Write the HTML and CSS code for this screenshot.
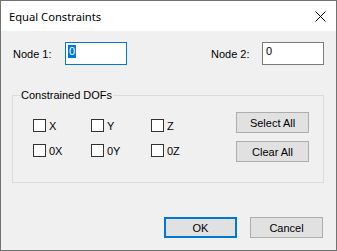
FILE: index.html
```html
<!DOCTYPE html>
<html lang="en">
<head>
    <meta charset="UTF-8">
    <title>Equal Constraints</title>
    <link rel="stylesheet" href="styles.css">
</head>
<body>

<div class="window">
    <div class="titlebar">
        <span class="title">Equal Constraints</span>
        <svg class="close" width="11" height="11" viewBox="0 0 11 11">
            <path d="M0.5 0.5 L10.5 10.5 M10.5 0.5 L0.5 10.5" stroke="#000" stroke-width="1" fill="none"/>
        </svg>
    </div>

    <div class="content">
        <div class="node-row">
            <div class="field">
                <label class="node-label">Node 1:</label>
                <div class="textbox focused"><span class="selected">0</span></div>
            </div>
            <div class="field">
                <label class="node-label">Node 2:</label>
                <div class="textbox">0</div>
            </div>
        </div>

        <fieldset class="group">
            <legend>Constrained DOFs</legend>
            <div class="group-body">
                <div class="checks">
                    <div class="check"><span class="box"></span>X</div>
                    <div class="check"><span class="box"></span>Y</div>
                    <div class="check"><span class="box"></span>Z</div>
                    <div class="check"><span class="box"></span>0X</div>
                    <div class="check"><span class="box"></span>0Y</div>
                    <div class="check"><span class="box"></span>0Z</div>
                </div>
                <div class="side-buttons">
                    <div class="button">Select All</div>
                    <div class="button">Clear All</div>
                </div>
            </div>
        </fieldset>

        <div class="footer">
            <div class="button default">OK</div>
            <div class="button">Cancel</div>
        </div>
    </div>
</div>

</body>
</html>
```

FILE: styles.css
```css
body {
    margin: 0;
    font-family: "Liberation Sans", Arial, sans-serif;
    font-size: 11px;
    color: #000;
}
.window {
    width: 337px;
    height: 251px;
    box-sizing: border-box;
    border: 1px solid #727272;
    background: #f0f0f0;
    display: flex;
    flex-direction: column;
}
.titlebar {
    height: 30px;
    background: #fff;
    display: flex;
    align-items: center;
    justify-content: space-between;
    padding: 0 10px 0 8px;
}
.title {
    font-family: "Noto Sans", "Open Sans", sans-serif;
    font-size: 11.2px;
    margin-top: 1px;
}
.close {
    display: block;
}
.content {
    flex: 1;
    padding: 11px 12px 12px 11px;
    display: flex;
    flex-direction: column;
}
.node-row {
    display: flex;
    justify-content: space-between;
    height: 23px;
}
.field {
    display: flex;
    align-items: center;
}
.node-label {
    width: 53px;
    padding-left: 1px;
    box-sizing: border-box;
}
.field + .field .node-label {
    width: 52px;
}
.textbox {
    width: 62px;
    height: 23px;
    box-sizing: border-box;
    border: 1px solid #7a7a7a;
    background: #fff;
    padding: 2px 0 0 3px;
    line-height: 13px;
}
.textbox.focused {
    border-color: #0078d7;
    padding-left: 2px;
}
.selected {
    display: inline-block;
    background: #0078d7;
    color: #fff;
    padding: 0 1px;
}
.group {
    margin: 23px 0 0 0;
    padding: 0;
    border: 1px solid #dcdcdc;
    min-width: 0;
}
.group legend {
    padding: 0 1px;
    margin-left: 7px;
    line-height: 14px;
}
.group-body {
    display: flex;
    justify-content: space-between;
    padding: 10px 14px 20px 20px;
}
.checks {
    display: grid;
    grid-template-columns: 58px 60px 60px;
    row-gap: 12px;
    margin-top: 7px;
    align-content: start;
}
.check {
    display: flex;
    align-items: center;
    height: 13px;
}
.box {
    width: 13px;
    height: 13px;
    box-sizing: border-box;
    border: 1px solid #333;
    background: #fff;
    margin-right: 3px;
}
.side-buttons {
    display: flex;
    flex-direction: column;
    gap: 8px;
}
.button {
    width: 73px;
    height: 21px;
    box-sizing: border-box;
    border: 1px solid #adadad;
    background: #e1e1e1;
    display: flex;
    align-items: center;
    justify-content: center;
}
.button.default {
    border: 2px solid #0078d7;
}
.footer {
    margin-top: auto;
    display: flex;
    justify-content: flex-end;
    gap: 13px;
    padding-right: 1px;
}
```
